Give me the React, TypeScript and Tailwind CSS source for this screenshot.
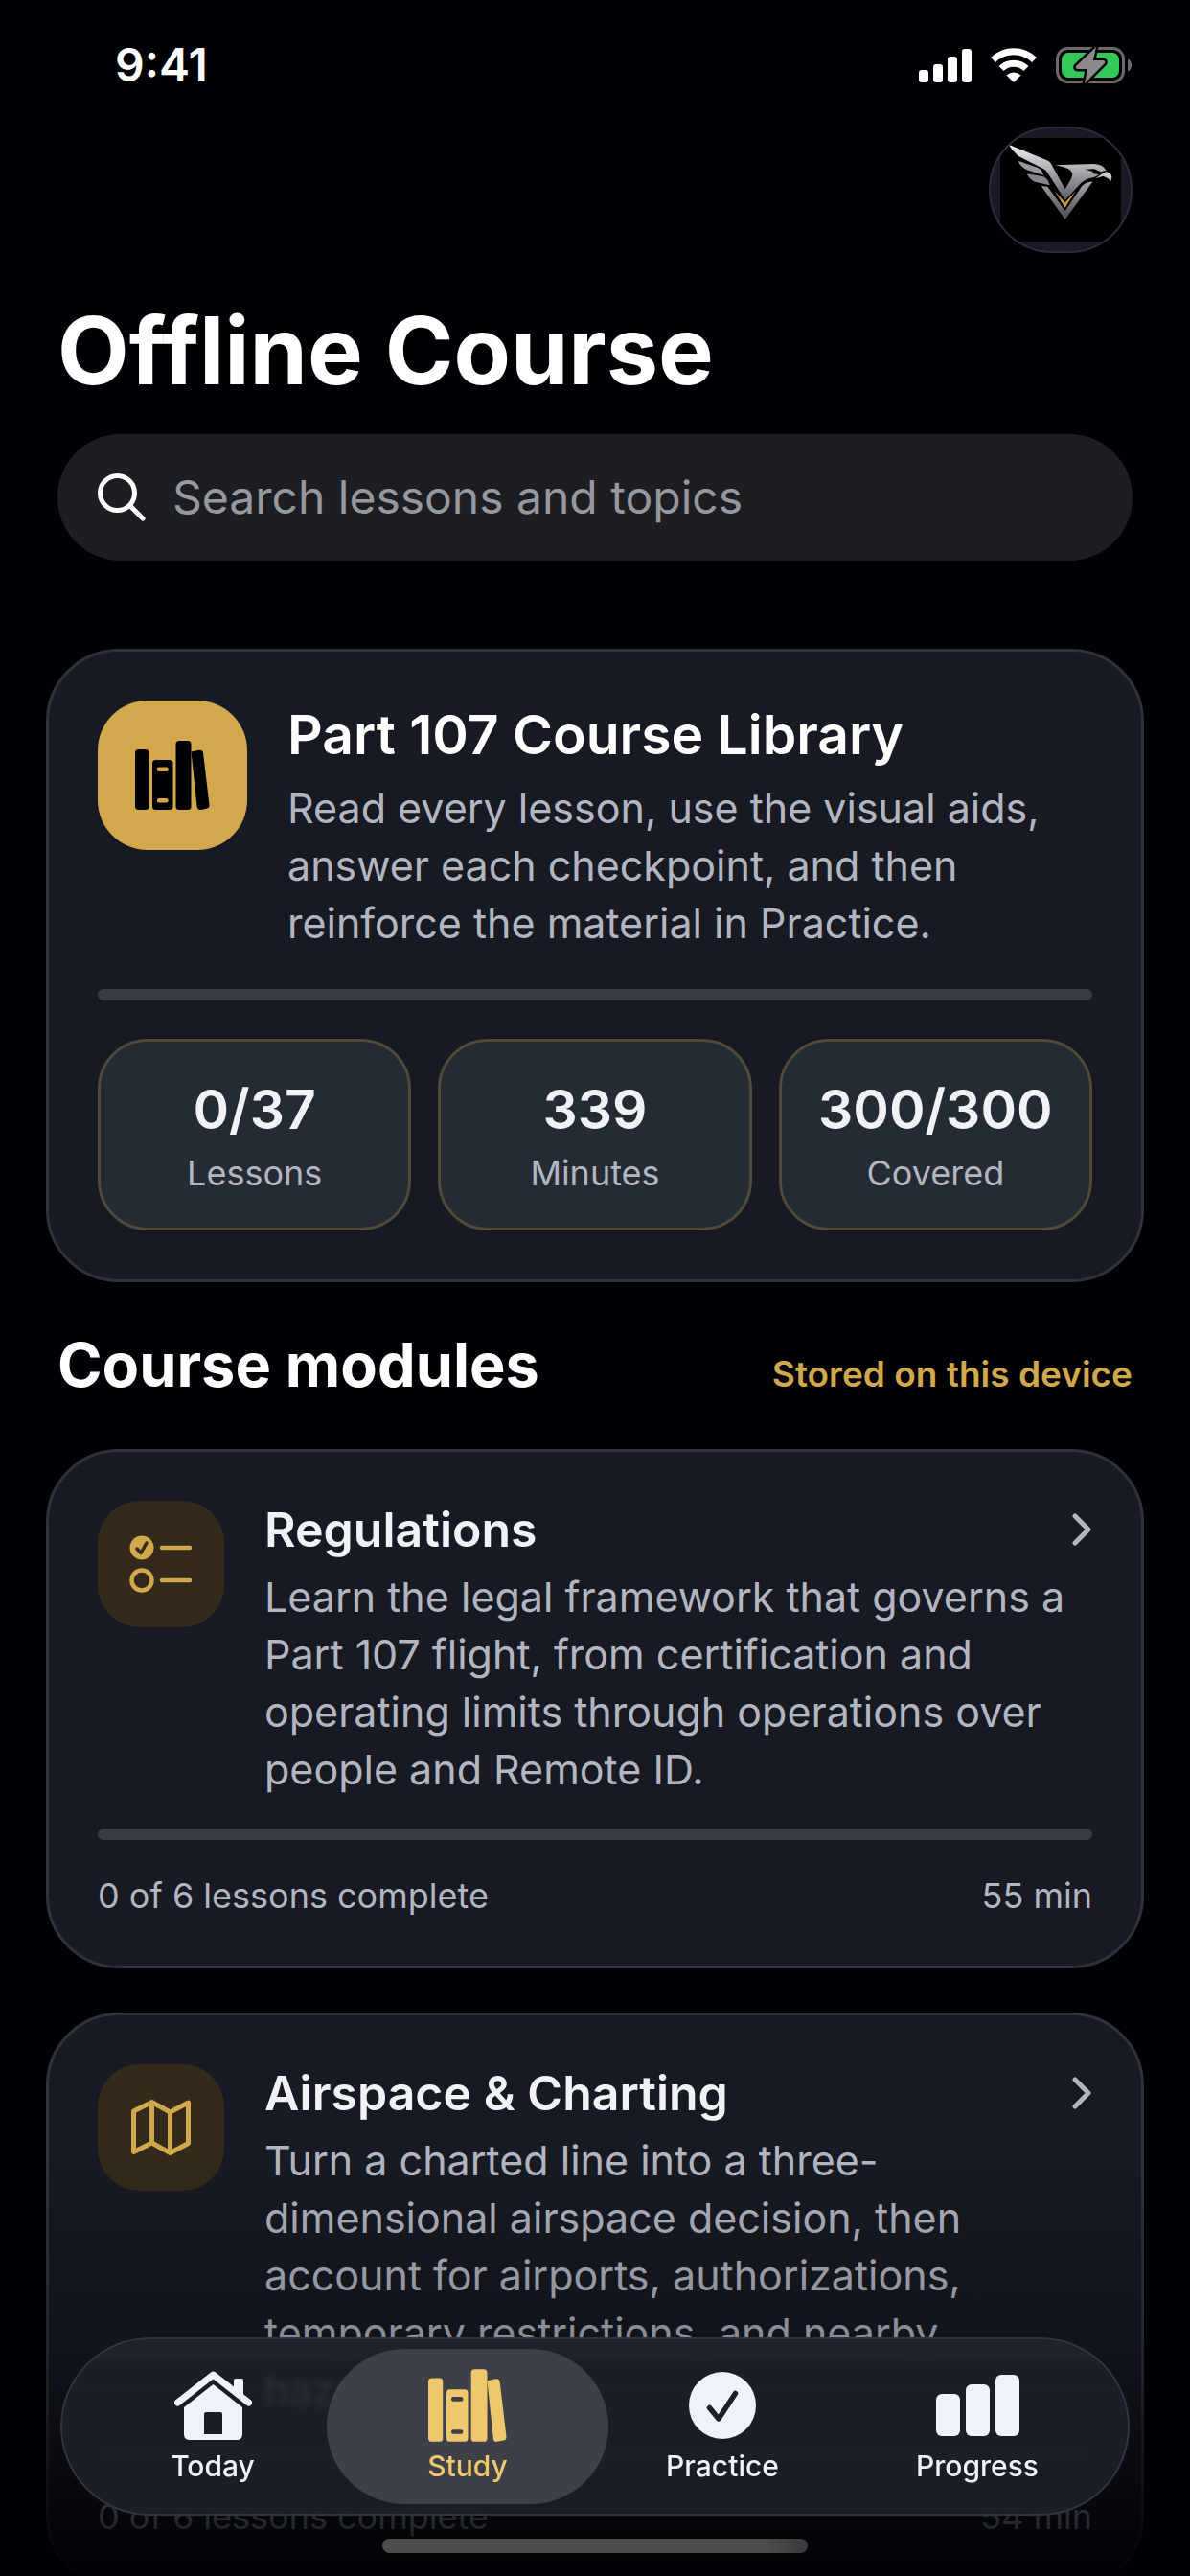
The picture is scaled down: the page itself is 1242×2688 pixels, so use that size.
import React, { useState } from 'react';

interface IconProps {
  className?: string;
}

interface Module {
  title: string;
  description: string;
  lessons: number;
  minutes: number;
  icon: React.ComponentType<IconProps>;
}

interface Tab {
  label: string;
  icon: React.ComponentType<IconProps>;
  iconSize: string;
}

function SignalIcon() {
  return (
    <svg viewBox="0 0 55 35" className="w-[55px] h-[35px]" fill="#fff" aria-hidden="true">
      <rect x="0" y="22" width="10" height="13" rx="3" />
      <rect x="15" y="16" width="10" height="19" rx="3" />
      <rect x="30" y="8" width="10" height="27" rx="3" />
      <rect x="45" y="0" width="10" height="35" rx="3" />
    </svg>
  );
}

function WifiIcon() {
  return (
    <svg viewBox="0 0 48 36" className="w-[48px] h-[36px]" aria-hidden="true">
      <g fill="none" stroke="#fff" strokeWidth="7">
        <path d="M2.500 12.500A30.500 30.500 0 0 1 45.500 12.500" />
        <path d="M11 21.500A18.500 18.500 0 0 1 37 21.500" />
      </g>
      <path d="M16.500 28.500Q24 22.500 31.500 28.500L24 36Z" fill="#fff" />
    </svg>
  );
}

function BatteryIcon() {
  const bolt = 'M42 0L21 20Q20 23 23 23L33 23L30 38L51 17Q52 14 49 14L39 14Z';
  return (
    <svg viewBox="0 0 80 38" className="w-[80px] h-[38px]" aria-hidden="true">
      <rect x="1.500" y="1.500" width="69" height="35" rx="11" fill="none" stroke="#6b6b6f" strokeWidth="3" />
      <rect x="6" y="6" width="60" height="26" rx="7" fill="#34c759" />
      <path d="M75 12.500Q79 14 79 19T75 25.500Z" fill="#6b6b6f" />
      <path d={bolt} fill="#8a8a8d" stroke="#000105" strokeWidth="5" strokeLinejoin="round" paintOrder="stroke" />
    </svg>
  );
}

function FalconLogo() {
  return (
    <svg viewBox="342 372 378 324" className="w-[126px] h-[108px] shrink-0" aria-hidden="true">
      <defs>
        <linearGradient id="wing" x1="0" y1="0" x2="0" y2="1">
          <stop offset="0" stopColor="#f0f0f2" />
          <stop offset="0.5" stopColor="#a5a6ab" />
          <stop offset="1" stopColor="#5c5d63" />
        </linearGradient>
        <linearGradient id="vee" x1="0" y1="0" x2="0" y2="1">
          <stop offset="0" stopColor="#a3a4a8" />
          <stop offset="1" stopColor="#4c4d53" />
        </linearGradient>
      </defs>
      <rect x="342" y="372" width="378" height="324" fill="#000" />
      <path
        d="M368 392L488 442Q500 447 505 460L545 532L564 500Q574 480 556 469Q542 462 514 457L636 453Q664 455 674 474L656 478L636 469L606 470L630 476L634 484L652 486L638 494Q610 498 594 514L545 566L492 484Q487 472 470 465L398 428Q378 410 368 392Z"
        fill="url(#wing)"
      />
      <path d="M674 477Q693 484 691 496L687 510Q684 499 674 496L664 491L640 499L658 486Z" fill="#c9cacd" />
      <path d="M397 443L458 464Q474 470 477 488L426 472Q406 462 397 443Z" fill="#98999e" />
      <path d="M425 484L478 493Q492 500 497 520L450 509Q432 500 425 484Z" fill="#85868b" />
      <path d="M470 522L490 524L545 600L598 522Q606 512 632 508L545 627Z" fill="url(#vee)" />
      <path d="M512 538L545 574L578 538L545 590Z" fill="#c9983f" />
    </svg>
  );
}

function SearchIcon() {
  return (
    <svg viewBox="0 0 50 50" className="w-[50px] h-[50px] shrink-0" fill="none" stroke="#fff" strokeWidth="5" strokeLinecap="round" aria-hidden="true">
      <circle cx="20.500" cy="20.500" r="18" />
      <path d="M34 34L47 47" />
    </svg>
  );
}

function BooksIcon({ className }: IconProps) {
  return (
    <svg viewBox="0 0 78 72" className={className} fill="currentColor" aria-hidden="true">
      <rect x="0" y="9" width="14.500" height="63" rx="3.500" />
      <path
        fillRule="evenodd"
        d="M21.500 20H36Q39.500 20 39.500 23.500V68.500Q39.500 72 36 72H21.500Q18 72 18 68.500V23.500Q18 20 21.500 20ZM25 27.500A2.200 2.200 0 0 0 25 32H32.500A2.200 2.200 0 0 0 32.500 27.500ZM25 60A2.200 2.200 0 0 0 25 64.400H32.500A2.200 2.200 0 0 0 32.500 60Z"
      />
      <rect x="42.500" y="0" width="16" height="72" rx="3.500" />
      <path d="M58.500 11.500L67 9.700Q70.500 9.300 71 12.500L77.500 67Q77.800 70.200 74.500 70.800L68.500 72Q65 72.300 64.600 69Z" />
    </svg>
  );
}

function HouseIcon({ className }: IconProps) {
  return (
    <svg viewBox="0 0 81 72" className={className} fill="currentColor" aria-hidden="true">
      <path d="M3.500 33L40.500 4L77.500 33" fill="none" stroke="currentColor" strokeWidth="7" strokeLinecap="round" strokeLinejoin="round" />
      <path d="M62 24V10Q62 8 64 8H70Q72 8 72 10V31Z" />
      <path fillRule="evenodd" d="M40.500 14L71 38V66Q71 72 65 72H16Q10 72 10 66V38ZM33 43Q31 43 31 45V66H50V45Q50 43 48 43Z" />
    </svg>
  );
}

function CheckIcon({ className }: IconProps) {
  return (
    <svg viewBox="0 0 70 70" className={className} aria-hidden="true">
      <circle cx="35" cy="35" r="35" fill="currentColor" />
      <path d="M21.500 37.500L31 49L48.500 22.500" fill="none" stroke="#1c1f26" strokeWidth="5.500" strokeLinecap="round" strokeLinejoin="round" />
    </svg>
  );
}

function BarsIcon({ className }: IconProps) {
  return (
    <svg viewBox="0 0 87 64" className={className} fill="currentColor" aria-hidden="true">
      <rect x="0" y="20" width="25" height="44" rx="6" />
      <rect x="31" y="10" width="25" height="54" rx="6" />
      <rect x="62" y="0" width="25" height="64" rx="6" />
    </svg>
  );
}

function ChecklistIcon({ className }: IconProps) {
  return (
    <svg viewBox="0 0 66 60" className={className} fill="none" stroke="currentColor" strokeWidth="4.500" strokeLinecap="round" strokeLinejoin="round" aria-hidden="true">
      <circle cx="13" cy="13" r="12.500" fill="currentColor" stroke="none" />
      <path d="M8 14L12 18.500L18 8" stroke="#332a1b" strokeWidth="3.500" />
      <circle cx="13" cy="47" r="10.500" />
      <path d="M34 13H63M34 47H63" />
    </svg>
  );
}

function MapIcon({ className }: IconProps) {
  return (
    <svg viewBox="0 0 62 60" className={className} fill="none" stroke="currentColor" strokeWidth="5" strokeLinejoin="round" aria-hidden="true">
      <path d="M2.500 13L21.500 3.500L40.500 14L59.500 4V46.500L40.500 56.500L21.500 46L2.500 55.500ZM21.500 3.500V46M40.500 14V56.500" />
    </svg>
  );
}

const STATS = [
  { value: '0/37', label: 'Lessons' },
  { value: '339', label: 'Minutes' },
  { value: '300/300', label: 'Covered' },
];

const MODULES: Module[] = [
  {
    title: 'Regulations',
    description:
      'Learn the legal framework that governs a Part 107 flight, from certification and operating limits through operations over people and Remote ID.',
    lessons: 6,
    minutes: 55,
    icon: ChecklistIcon,
  },
  {
    title: 'Airspace & Charting',
    description:
      'Turn a charted line into a three-dimensional airspace decision, then account for airports, authorizations, temporary restrictions, and nearby hazards.',
    lessons: 6,
    minutes: 54,
    icon: MapIcon,
  },
];

const TABS: Tab[] = [
  { label: 'Today', icon: HouseIcon, iconSize: 'w-[81px] h-[72px]' },
  { label: 'Study', icon: BooksIcon, iconSize: 'w-[82px] h-[76px]' },
  { label: 'Practice', icon: CheckIcon, iconSize: 'w-[70px] h-[70px]' },
  { label: 'Progress', icon: BarsIcon, iconSize: 'w-[87px] h-[64px]' },
];

function StatusBar() {
  return (
    <div className="flex items-center justify-between h-[132px] pt-1 pl-[72px] pr-3">
      <span className="text-[48px] leading-[60px] font-semibold text-white">9:41</span>
      <div className="flex items-center gap-5">
        <SignalIcon />
        <WifiIcon />
        <BatteryIcon />
      </div>
    </div>
  );
}

function ProgressTrack({ label }: { label: string }) {
  return <div role="progressbar" aria-label={label} aria-valuenow={0} className="h-3 rounded-full bg-[#3a3c44]" />;
}

function ModuleCard({ module }: { module: Module }) {
  const Icon = module.icon;

  return (
    <button className="block w-full p-[51px] text-left rounded-[76px] border-3 border-[#2f3239] bg-[#171a22]">
      <div className="flex items-start gap-[42px]">
        <div className="w-[132px] h-[132px] shrink-0 rounded-[44px] bg-[#332a1b] flex items-center justify-center text-[#d1a84b]">
          <Icon className="w-[66px] h-[60px]" />
        </div>
        <div className="flex-1">
          <div className="flex items-center justify-between">
            <h3 className="text-[50px] leading-[60px] font-semibold text-[#f1f2f5]">{module.title}</h3>
            <svg viewBox="0 0 21 34" className="w-[21px] h-[34px]" fill="none" stroke="#b3b6c1" strokeWidth="5" strokeLinecap="round" strokeLinejoin="round" aria-hidden="true">
              <path d="M3 3L17 17L3 31" />
            </svg>
          </div>
          <p className="mt-[10px] text-[43px] leading-[60px] text-[#b3b6c1]">{module.description}</p>
        </div>
      </div>
      <div className="mt-8">
        <ProgressTrack label={module.title} />
      </div>
      <div className="mt-9 flex justify-between text-[36px] leading-[44px] text-[#b3b6c1]">
        <span>0 of {module.lessons} lessons complete</span>
        <span>{module.minutes} min</span>
      </div>
    </button>
  );
}

export default function App() {
  const [search, setSearch] = useState('');
  const [activeTab, setActiveTab] = useState('Study');

  return (
    <div className="relative h-dvh overflow-hidden bg-[#000105] font-['Inter',sans-serif]">
      <main className="h-full overflow-y-auto [scrollbar-width:none] px-12">
        <StatusBar />

        <header className="px-3">
          <div className="flex justify-end">
            <button aria-label="Profile" className="w-[150px] h-[132px] rounded-full overflow-hidden border-2 border-[#2b2c37] bg-[#191a23] flex items-center justify-center">
              <FalconLogo />
            </button>
          </div>
          <h1 className="mt-[42px] text-[97px] leading-[120px] font-bold text-white">Offline Course</h1>
          <label className="mt-[27px] h-[132px] px-[42px] rounded-full bg-[#1d1e23] flex items-center gap-7">
            <SearchIcon />
            <input
              type="text"
              aria-label="Search"
              value={search}
              onChange={e => setSearch(e.target.value)}
              placeholder="Search lessons and topics"
              className="flex-1 min-w-0 bg-transparent text-[48px] text-white placeholder-[#97989e] focus:outline-none"
            />
          </label>
        </header>

        {/* Course summary */}
        <section className="mt-[92px] p-[51px] rounded-[76px] border-3 border-[#2f3239] bg-[#171a22]">
          <div className="flex items-start gap-[42px]">
            <div className="w-[156px] h-[156px] shrink-0 rounded-[52px] bg-[#d1a84b] flex items-center justify-center text-[#000105]">
              <BooksIcon className="w-[78px] h-[72px]" />
            </div>
            <div className="flex-1">
              <h2 className="text-[57px] leading-[72px] font-semibold text-white">Part 107 Course Library</h2>
              <p className="mt-[10px] text-[43px] leading-[60px] text-[#b3b6c1]">
                Read every lesson, use the visual aids, answer each checkpoint, and then reinforce the material in Practice.
              </p>
            </div>
          </div>
          <div className="mt-[39px]">
            <ProgressTrack label="Course progress" />
          </div>
          <div className="mt-10 grid grid-cols-3 gap-7">
            {STATS.map(stat => (
              <div key={stat.label} className="py-[35px] flex flex-col items-center gap-2 rounded-[52px] border-3 border-[#51493a] bg-[#252b33]">
                <span className="text-[57px] leading-[72px] font-semibold text-[#f1f2f5]">{stat.value}</span>
                <span className="text-[36px] leading-[44px] text-[#b3b6c1]">{stat.label}</span>
              </div>
            ))}
          </div>
        </section>

        <div className="mt-[46px] px-3 flex items-baseline justify-between">
          <h2 className="text-[63px] leading-[80px] font-bold text-white">Course modules</h2>
          <span className="text-[37px] font-semibold text-[#d1a84b]">Stored on this device</span>
        </div>

        <div className="mt-12 flex flex-col gap-[46px]">
          {MODULES.map(module => (
            <ModuleCard key={module.title} module={module} />
          ))}
        </div>
      </main>

      {/* Fade under the floating tab bar */}
      <div className="absolute inset-x-0 bottom-0 h-[440px] pointer-events-none bg-linear-to-b from-transparent via-[#000105]/25 via-45% to-[#000105]/95" />

      <nav className="absolute inset-x-[63px] bottom-[63px] h-[186px] px-6 flex rounded-full border-2 border-[#30343f] bg-linear-to-b from-[#1f2229] from-10% via-[#1f2229]/80 via-15% to-[#1d2029]/90 backdrop-blur-[3px]">
        {TABS.map(tab => {
          const isActive = tab.label === activeTab;
          const Icon = tab.icon;

          return (
            <button
              key={tab.label}
              onClick={() => setActiveTab(tab.label)}
              className={`relative flex-1 flex flex-col items-center pt-[31px] ${isActive ? 'text-[#efc86d]' : 'text-[#f0f2fb]'}`}
            >
              {isActive && <span className="absolute -inset-x-[14px] inset-y-[10px] rounded-full bg-[#3e4047]" />}
              <span className="relative h-[76px] flex items-center justify-center">
                <Icon className={tab.iconSize} />
              </span>
              <span className="relative mt-[7px] text-[30px] leading-[36px] font-medium">{tab.label}</span>
            </button>
          );
        })}
      </nav>

      <div className="absolute bottom-6 left-1/2 -translate-x-1/2 w-[444px] h-[15px] rounded-full bg-linear-to-r from-[#4d4d4d] from-90% to-[#3a3a3a]" />
    </div>
  );
}
